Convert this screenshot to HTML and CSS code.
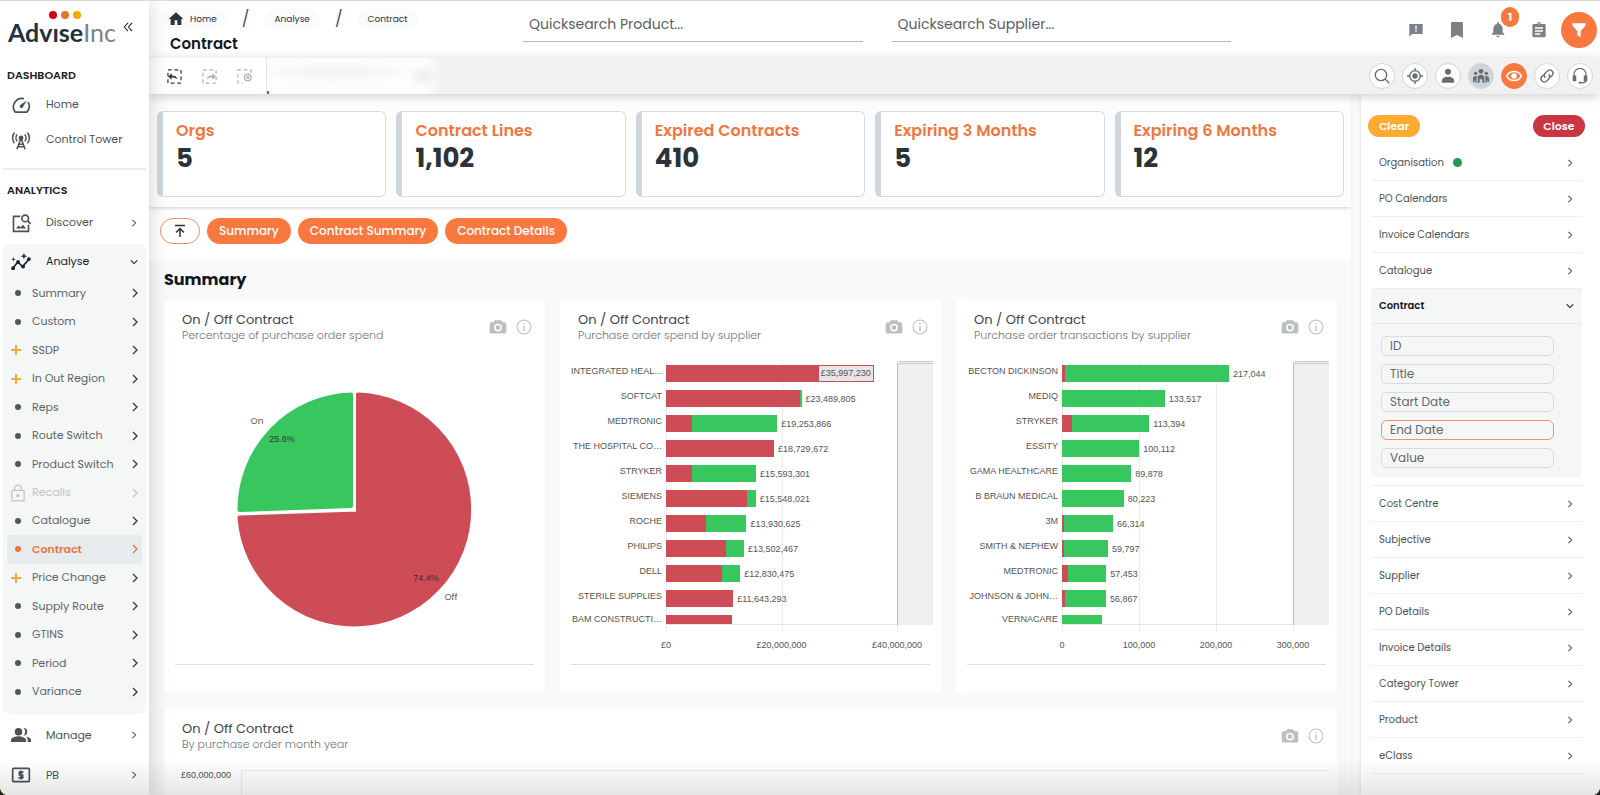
FILE: index.html
```html
<!DOCTYPE html>
<html lang="en">
<head>
    <meta charset="UTF-8">
    <meta name="viewport" content="width=device-width, initial-scale=1.0">
    <title>AdviseInc - Contract</title>
    <link rel="stylesheet" href="styles.css">
</head>
<body>
    <!-- icon sprite -->
    <svg class="sprite" aria-hidden="true">
        <symbol id="i-right" viewBox="0 0 10 10"><path d="M3 1l4 4-4 4" fill="none" stroke="currentColor" stroke-width="1.3"/></symbol>
        <symbol id="i-down" viewBox="0 0 10 10"><path d="M1 3l4 4 4-4" fill="none" stroke="currentColor" stroke-width="1.3"/></symbol>
        <symbol id="i-camera" viewBox="0 0 24 24"><path fill="currentColor" fill-rule="evenodd" d="M8 3L6.200 5.500H3A2 2 0 0 0 1 7.500v11a2 2 0 0 0 2 2h18a2 2 0 0 0 2-2v-11a2 2 0 0 0-2-2h-3.200L16 3zM12 7.500a5.300 5.300 0 1 1 0 10.600a5.300 5.300 0 0 1 0-10.600zm0 2.100a3.200 3.200 0 1 0 0 6.400a3.200 3.200 0 0 0 0-6.400z"/></symbol>
        <symbol id="i-info" viewBox="0 0 24 24"><circle cx="12" cy="12" r="10.500" fill="none" stroke="currentColor" stroke-width="1.600"/><path d="M11 10h2v8h-2zM11 6h2v2h-2z" fill="currentColor"/></symbol>
    </svg>

    <aside class="sidebar">
        <div class="brand">
            <a class="logo" href="#home" aria-label="AdviseInc">
                <span class="logo-dots"><i class="dot-red"></i><i class="dot-orange"></i><i class="dot-yellow"></i></span>
                <b>Advıse</b><span>Inc</span>
            </a>
            <button class="collapse" aria-label="Collapse menu">
                <svg viewBox="0 0 12 12"><path d="M6 1L1.500 6L6 11M11 1L6.500 6L11 11" fill="none" stroke="currentColor" stroke-width="1.300"/></svg>
            </button>
        </div>

        <h2>DASHBOARD</h2>
        <a class="menu-item" href="#home">
            <svg viewBox="0 0 24 24" fill="none" stroke="currentColor" stroke-width="2"><path d="M5 20.500A10.300 10.300 0 0 1 15.500 4.300M20.500 8.500a10.300 10.300 0 0 1-1.500 12M4.500 20.500h15"/><path d="M19 6.500l-5 8.500a2 2 0 1 1-3-3z" fill="currentColor" stroke="none"/></svg>
            <span>Home</span>
        </a>
        <a class="menu-item" href="#tower">
            <svg viewBox="0 0 24 24" fill="none" stroke="currentColor" stroke-width="1.800"><path d="M12 10L7 23M12 10l5 13M9.500 17h5M8.500 20h7M7.500 13.500a6 6 0 0 1 0-8M16.500 13.500a6 6 0 0 0 0-8M4.300 16a10 10 0 0 1 0-13M19.700 16a10 10 0 0 0 0-13"/><circle cx="12" cy="9.500" r="2" fill="currentColor"/></svg>
            <span>Control Tower</span>
        </a>
        <hr>
        <h2>ANALYTICS</h2>
        <a class="menu-item" href="#discover">
            <svg viewBox="0 0 24 24" fill="none" stroke="currentColor" stroke-width="2"><path d="M11 4H3v18h18v-8"/><circle cx="17" cy="6.500" r="4"/><path d="M20 9.500l3.500 3.500"/><path d="M6 18.500l3-3.500 2.500 2 3-3 3.500 4.500z" fill="currentColor" stroke="none"/></svg>
            <span>Discover</span><svg class="chev"><use href="#i-right"/></svg>
        </a>

        <nav class="submenu">
            <a class="menu-item open" href="#analyse">
                <svg viewBox="0 0 24 24"><path d="M2 20l6-8 6 5.500L22 8" fill="none" stroke="currentColor" stroke-width="2"/><g fill="currentColor"><circle cx="2.500" cy="19.500" r="2.300"/><circle cx="8.500" cy="12" r="2.300"/><circle cx="14.500" cy="17.500" r="2.300"/><circle cx="21.500" cy="8.500" r="2.300"/><path d="M15.500 1l1 3 3 1-3 1-1 3-1-3-3-1 3-1zM3 6l.700 2 2 .700-2 .700-.700 2-.700-2-2-.700 2-.700z"/></g></svg>
                <span>Analyse</span><svg class="chev"><use href="#i-down"/></svg>
            </a>
            <ul>
                <li><a href="#summary"><i class="bullet"></i>Summary<svg class="chev"><use href="#i-right"/></svg></a></li>
                <li><a href="#custom"><i class="bullet"></i>Custom<svg class="chev"><use href="#i-right"/></svg></a></li>
                <li><a href="#ssdp"><i class="plus"></i>SSDP<svg class="chev"><use href="#i-right"/></svg></a></li>
                <li><a href="#region"><i class="plus"></i>In Out Region<svg class="chev"><use href="#i-right"/></svg></a></li>
                <li><a href="#reps"><i class="bullet"></i>Reps<svg class="chev"><use href="#i-right"/></svg></a></li>
                <li><a href="#route"><i class="bullet"></i>Route Switch<svg class="chev"><use href="#i-right"/></svg></a></li>
                <li><a href="#product"><i class="bullet"></i>Product Switch<svg class="chev"><use href="#i-right"/></svg></a></li>
                <li><a class="locked" href="#recalls"><svg class="lock" viewBox="0 0 16 20" fill="none" stroke="currentColor" stroke-width="1.500"><rect x="1" y="7" width="14" height="12" rx="1"/><path d="M4 7V5a4 4 0 0 1 8 0v2"/><circle cx="8" cy="13" r="1.200" fill="currentColor"/></svg>Recalls<svg class="chev"><use href="#i-right"/></svg></a></li>
                <li><a href="#catalogue"><i class="bullet"></i>Catalogue<svg class="chev"><use href="#i-right"/></svg></a></li>
                <li><a class="active" href="#contract"><i class="bullet"></i>Contract<svg class="chev"><use href="#i-right"/></svg></a></li>
                <li><a href="#price"><i class="plus"></i>Price Change<svg class="chev"><use href="#i-right"/></svg></a></li>
                <li><a href="#supply"><i class="bullet"></i>Supply Route<svg class="chev"><use href="#i-right"/></svg></a></li>
                <li><a href="#gtins"><i class="bullet"></i>GTINS<svg class="chev"><use href="#i-right"/></svg></a></li>
                <li><a href="#period"><i class="bullet"></i>Period<svg class="chev"><use href="#i-right"/></svg></a></li>
                <li><a href="#variance"><i class="bullet"></i>Variance<svg class="chev"><use href="#i-right"/></svg></a></li>
            </ul>
        </nav>

        <a class="menu-item tall" href="#manage">
            <svg viewBox="0 0 24 24" fill="currentColor"><circle cx="9" cy="8" r="4.500"/><path d="M0 20.500v-2.500c0-3 6-4.500 9-4.500s9 1.500 9 4.500v2.500zM15 3.500a4.500 4.500 0 0 1 0 9a6 6 0 0 0 0-9zM18 13.900c3 .600 6 1.900 6 4.100v2.500h-4v-2.500c0-1.700-.800-3-2-4.100z"/></svg>
            <span>Manage</span><svg class="chev"><use href="#i-right"/></svg>
        </a>
        <a class="menu-item tall" href="#pb">
            <svg viewBox="0 0 24 24" fill="none" stroke="currentColor" stroke-width="2"><rect x="2" y="4" width="20" height="16" rx="1"/><path d="M15 8.500h-5v3.500h4v3.500H9M12 6.500v11"/></svg>
            <span>PB</span><svg class="chev"><use href="#i-right"/></svg>
        </a>
    </aside>

    <div class="page">
        <header class="topbar">
            <div class="location">
                <nav class="crumbs">
                    <a class="crumb-home" href="#home"><svg viewBox="0 0 24 24"><path d="M10 21v-7h4v7h6v-9h3L12 2 1 12h3v9z" fill="currentColor"/></svg>Home</a>
                    <span>/</span>
                    <a href="#analyse">Analyse</a>
                    <span>/</span>
                    <a href="#contract">Contract</a>
                </nav>
                <h1>Contract</h1>
            </div>
            <div class="quicksearch">
                <input type="text" aria-label="Quicksearch product" placeholder="Quicksearch Product...">
                <input type="text" aria-label="Quicksearch supplier" placeholder="Quicksearch Supplier...">
            </div>
            <div class="top-icons">
                <button aria-label="Feedback"><svg viewBox="0 0 24 24"><path fill="currentColor" fill-rule="evenodd" d="M2 3h20v15H6l-4 4zM11 5.500v6h2v-6zM11 13v2h2v-2z"/></svg></button>
                <button aria-label="Bookmarks"><svg viewBox="0 0 24 24"><path fill="currentColor" d="M5 0h14a2 2 0 0 1 2 2v22l-9-4.500L3 24V2a2 2 0 0 1 2-2z"/></svg></button>
                <button class="bell" aria-label="Notifications"><svg viewBox="0 0 24 24"><path fill="currentColor" d="M12 23a2.500 2.500 0 0 0 2.500-2.500h-5A2.500 2.500 0 0 0 12 23zM19 15.500V10c0-3.500-2-6.300-5.300-7V2a1.700 1.700 0 0 0-3.400 0v1C7 3.700 5 6.500 5 10v5.500l-2.500 2.500v1h19v-1z"/></svg><span class="badge">1</span></button>
                <button aria-label="Tasks"><svg viewBox="0 0 24 24"><path fill="currentColor" fill-rule="evenodd" d="M9 3a3 3 0 0 1 6 0h5a2 2 0 0 1 2 2v16a2 2 0 0 1-2 2H4a2 2 0 0 1-2-2V5a2 2 0 0 1 2-2zM11 3.500h2v-1.500h-2zM6 8v2h12V8zM6 12.500v2h12v-2zM6 17v2h8v-2z"/></svg></button>
                <button class="filter" aria-label="Filters"><svg viewBox="0 0 24 24"><path fill="currentColor" d="M2 2h20v3l-7.500 9v9L9.500 20v-6L2 5z"/></svg></button>
            </div>
        </header>

        <div class="toolbar">
            <div class="history">
                <button aria-label="Undo selection"><svg viewBox="0 0 16 16"><rect x="1" y="1" width="14" height="14" fill="none" stroke="currentColor" stroke-width="1.300" stroke-dasharray="4 3"/><path d="M1 8l4-3.500v2.500c4 0 5 1 6 4-2-1.500-3-2-6-2v2.500z" fill="currentColor"/></svg></button>
                <button class="dim" aria-label="Redo selection"><svg viewBox="0 0 16 16"><rect x="1" y="1" width="14" height="14" fill="none" stroke="currentColor" stroke-width="1.300" stroke-dasharray="4 3"/><path d="M15 8l-4-3.500v2.500c-4 0-5 1-6 4 2-1.500 3-2 6-2v2.500z" fill="currentColor"/></svg></button>
                <button class="dim" aria-label="Clear selection"><svg viewBox="0 0 16 16" fill="none" stroke="currentColor" stroke-width="1.300"><path d="M15 4V1H1v14h5" stroke-dasharray="4 3"/><circle cx="11.500" cy="9" r="3.500"/><path d="M10 7.500l3 3M13 7.500l-3 3"/></svg></button>
            </div>
            <div class="selection"></div>
            <div class="tools">
                <button aria-label="Search"><svg viewBox="0 0 24 24" fill="none" stroke="currentColor" stroke-width="2"><circle cx="10.500" cy="10.500" r="8.500"/><path d="M16.500 16.500l6.500 6.500"/></svg></button>
                <button aria-label="Target"><svg viewBox="0 0 24 24" fill="none" stroke="currentColor" stroke-width="2"><circle cx="12" cy="12" r="8"/><circle cx="12" cy="12" r="3" fill="currentColor"/><path d="M12 0v5M12 19v5M0 12h5M19 12h5"/></svg></button>
                <button aria-label="User"><svg viewBox="0 0 24 24" fill="currentColor"><circle cx="12" cy="5.500" r="4.500"/><path d="M2.500 22c0-7 3.500-9 9.500-9s9.500 2 9.500 9z"/></svg></button>
                <button class="grey" aria-label="Groups"><svg viewBox="0 0 24 24" fill="currentColor"><circle cx="12" cy="5" r="3.500"/><circle cx="4" cy="8" r="2.500"/><circle cx="20" cy="8" r="2.500"/><path d="M7 22v-7c0-4 2-5 5-5s5 1 5 5v7h-3v-5h-4v5zM0 21v-5c0-3 1.500-4.500 5.500-4v10H3.500v-4H2.500v3zM24 21v-5c0-3-1.500-4.500-5.500-4v10h2v-4h1v3z"/></svg></button>
                <button class="orange" aria-label="View"><svg viewBox="0 0 24 24" fill="none" stroke="currentColor" stroke-width="2.400"><path d="M1 12c4.500-9 17.500-9 22 0-4.500 9-17.500 9-22 0z"/><circle cx="12" cy="12" r="3" fill="currentColor"/></svg></button>
                <button aria-label="Link"><svg viewBox="0 0 24 24" fill="none" stroke="currentColor" stroke-width="2"><path d="M9.500 14.500a5 5 0 0 1 0-7l3.500-3.500a5 5 0 0 1 7 7l-3 3M14.500 9.500a5 5 0 0 1 0 7L11 20a5 5 0 0 1-7-7l3-3"/></svg></button>
                <button aria-label="Support"><svg viewBox="0 0 24 24" fill="none" stroke="currentColor" stroke-width="1.800"><path d="M3 12V9.500a9 9 0 0 1 18 0V18a4 4 0 0 1-4 4h-5"/><path d="M2 12h3.500v7H2zM18.500 12H22v7h-3.500z" fill="currentColor"/><path d="M10 22h3" stroke-width="3"/></svg></button>
            </div>
        </div>

        <div class="body">
            <main>
                <section class="kpis">
                    <div class="kpi"><h3>Orgs</h3><p>5</p></div>
                    <div class="kpi"><h3>Contract Lines</h3><p>1,102</p></div>
                    <div class="kpi"><h3>Expired Contracts</h3><p>410</p></div>
                    <div class="kpi"><h3>Expiring 3 Months</h3><p>5</p></div>
                    <div class="kpi"><h3>Expiring 6 Months</h3><p>12</p></div>
                </section>

                <div class="jump">
                    <button class="to-top" aria-label="Back to top"><svg viewBox="0 0 14 14"><path d="M2 1.500h10M7 13V5M3 8.500l4-4 4 4" fill="none" stroke="currentColor" stroke-width="1.500"/></svg></button>
                    <button>Summary</button>
                    <button>Contract Summary</button>
                    <button>Contract Details</button>
                </div>

                <section class="summary">
                    <h2>Summary</h2>
                    <div class="cards">
                        <article class="card">
                            <div class="card-head">
                                <div><h3>On / Off Contract</h3><p>Percentage of purchase order spend</p></div>
                                <svg><use href="#i-camera"/></svg><svg class="info"><use href="#i-info"/></svg>
                            </div>
                            <svg class="pie" viewBox="0 0 359 293">
                                <path class="pie-off" d="M183 33.500A115 115 0 1 1 64.500 156.500L183 152.500z"/>
                                <path class="pie-on" d="M176 33.500A115 115 0 0 0 64.500 149L176 145z"/>
                                <text x="82" y="63">On</text>
                                <text class="pct" x="107" y="81">25.6%</text>
                                <text class="pct" x="251" y="220">74.4%</text>
                                <text x="276" y="239">Off</text>
                            </svg>
                            <hr>
                        </article>

                        <article class="card">
                            <div class="card-head">
                                <div><h3>On / Off Contract</h3><p>Purchase order spend by supplier</p></div>
                                <svg><use href="#i-camera"/></svg><svg class="info"><use href="#i-info"/></svg>
                            </div>
                            <div class="chart halves">
                                <div class="rows">
                                    <div class="row"><span class="name">INTEGRATED HEAL…</span><div class="track"><i class="off" style="width:90%"><span class="inside">£35,997,230</span></i></div></div>
                                    <div class="row"><span class="name">SOFTCAT</span><div class="track"><i class="off" style="width:57.9%"></i><i class="on" style="width:0.8%"></i><span>£23,489,805</span></div></div>
                                    <div class="row"><span class="name">MEDTRONIC</span><div class="track"><i class="off" style="width:11.3%"></i><i class="on" style="width:36.9%"></i><span>£19,253,866</span></div></div>
                                    <div class="row"><span class="name">THE HOSPITAL CO…</span><div class="track"><i class="off" style="width:46.8%"></i><span>£18,729,672</span></div></div>
                                    <div class="row"><span class="name">STRYKER</span><div class="track"><i class="off" style="width:11.3%"></i><i class="on" style="width:27.7%"></i><span>£15,593,301</span></div></div>
                                    <div class="row"><span class="name">SIEMENS</span><div class="track"><i class="off" style="width:34.9%"></i><i class="on" style="width:4%"></i><span>£15,548,021</span></div></div>
                                    <div class="row"><span class="name">ROCHE</span><div class="track"><i class="off" style="width:17.1%"></i><i class="on" style="width:17.7%"></i><span>£13,930,625</span></div></div>
                                    <div class="row"><span class="name">PHILIPS</span><div class="track"><i class="off" style="width:25.8%"></i><i class="on" style="width:8%"></i><span>£13,502,467</span></div></div>
                                    <div class="row"><span class="name">DELL</span><div class="track"><i class="off" style="width:24.2%"></i><i class="on" style="width:7.9%"></i><span>£12,830,475</span></div></div>
                                    <div class="row"><span class="name">STERILE SUPPLIES</span><div class="track"><i class="off" style="width:29.1%"></i><span>£11,643,293</span></div></div>
                                    <div class="row"><span class="name">BAM CONSTRUCTI…</span><div class="track"><i class="off" style="width:28.5%"></i></div></div>
                                </div>
                                <div class="scroller"></div>
                                <div class="axis"><span>£0</span><span>£20,000,000</span><span>£40,000,000</span></div>
                            </div>
                            <hr>
                        </article>

                        <article class="card">
                            <div class="card-head">
                                <div><h3>On / Off Contract</h3><p>Purchase order transactions by supplier</p></div>
                                <svg><use href="#i-camera"/></svg><svg class="info"><use href="#i-info"/></svg>
                            </div>
                            <div class="chart thirds">
                                <div class="rows">
                                    <div class="row"><span class="name">BECTON DICKINSON</span><div class="track"><i class="off" style="width:1.3%"></i><i class="on" style="width:71%"></i><span>217,044</span></div></div>
                                    <div class="row"><span class="name">MEDIQ</span><div class="track"><i class="on" style="width:44.5%"></i><span>133,517</span></div></div>
                                    <div class="row"><span class="name">STRYKER</span><div class="track"><i class="off" style="width:4.2%"></i><i class="on" style="width:33.6%"></i><span>113,394</span></div></div>
                                    <div class="row"><span class="name">ESSITY</span><div class="track"><i class="on" style="width:33.4%"></i><span>100,112</span></div></div>
                                    <div class="row"><span class="name">GAMA HEALTHCARE</span><div class="track"><i class="on" style="width:30%"></i><span>89,878</span></div></div>
                                    <div class="row"><span class="name">B BRAUN MEDICAL</span><div class="track"><i class="off" style="width:0.2%"></i><i class="on" style="width:26.5%"></i><span>80,223</span></div></div>
                                    <div class="row"><span class="name">3M</span><div class="track"><i class="off" style="width:0.8%"></i><i class="on" style="width:21.3%"></i><span>66,314</span></div></div>
                                    <div class="row"><span class="name">SMITH &amp; NEPHEW</span><div class="track"><i class="off" style="width:0.8%"></i><i class="on" style="width:19.1%"></i><span>59,797</span></div></div>
                                    <div class="row"><span class="name">MEDTRONIC</span><div class="track"><i class="off" style="width:2.6%"></i><i class="on" style="width:16.6%"></i><span>57,453</span></div></div>
                                    <div class="row"><span class="name">JOHNSON &amp; JOHN…</span><div class="track"><i class="off" style="width:1.3%"></i><i class="on" style="width:17.7%"></i><span>56,867</span></div></div>
                                    <div class="row"><span class="name">VERNACARE</span><div class="track"><i class="on" style="width:17.5%"></i></div></div>
                                </div>
                                <div class="scroller"></div>
                                <div class="axis"><span>0</span><span>100,000</span><span>200,000</span><span>300,000</span></div>
                            </div>
                            <hr>
                        </article>

                        <article class="card wide">
                            <div class="card-head">
                                <div><h3>On / Off Contract</h3><p>By purchase order month year</p></div>
                                <svg><use href="#i-camera"/></svg><svg class="info"><use href="#i-info"/></svg>
                            </div>
                            <div class="timeline"><span>£60,000,000</span><div class="plot"></div></div>
                        </article>
                    </div>
                </section>
            </main>

            <aside class="filters">
                <div class="filter-actions">
                    <button class="clear">Clear</button>
                    <button class="close">Close</button>
                </div>
                <ul>
                    <li><button>Organisation<i class="on-dot"></i><svg class="chev"><use href="#i-right"/></svg></button></li>
                    <li><button>PO Calendars<svg class="chev"><use href="#i-right"/></svg></button></li>
                    <li><button>Invoice Calendars<svg class="chev"><use href="#i-right"/></svg></button></li>
                    <li><button>Catalogue<svg class="chev"><use href="#i-right"/></svg></button></li>
                    <li class="expanded">
                        <button>Contract<svg class="chev"><use href="#i-down"/></svg></button>
                        <div class="options">
                            <button>ID</button>
                            <button>Title</button>
                            <button>Start Date</button>
                            <button class="current">End Date</button>
                            <button>Value</button>
                        </div>
                    </li>
                    <li><button>Cost Centre<svg class="chev"><use href="#i-right"/></svg></button></li>
                    <li><button>Subjective<svg class="chev"><use href="#i-right"/></svg></button></li>
                    <li><button>Supplier<svg class="chev"><use href="#i-right"/></svg></button></li>
                    <li><button>PO Details<svg class="chev"><use href="#i-right"/></svg></button></li>
                    <li><button>Invoice Details<svg class="chev"><use href="#i-right"/></svg></button></li>
                    <li><button>Category Tower<svg class="chev"><use href="#i-right"/></svg></button></li>
                    <li><button>Product<svg class="chev"><use href="#i-right"/></svg></button></li>
                    <li><button>eClass<svg class="chev"><use href="#i-right"/></svg></button></li>
                </ul>
            </aside>
        </div>
    </div>
    <div class="fade"></div>
</body>
</html>
```
FILE: styles.css
```css
* {
    box-sizing: border-box;
}
html {
    background: #2b2410;
}
body {
    margin: 0;
    height: 100vh;
    display: flex;
    overflow: hidden;
    position: relative;
    border-top: 1px solid #dcdcdc;
    border-radius: 0 0 8px 8px;
    background: #fdfdfd;
    font-family: Poppins, Inter, sans-serif;
    font-size: 11px;
    color: #4a5258;
}
h1, h2, h3, p, ul {
    margin: 0;
    padding: 0;
}
ul {
    list-style: none;
}
a {
    color: inherit;
    text-decoration: none;
}
button {
    border: 0;
    padding: 0;
    background: none;
    font: inherit;
    color: inherit;
    cursor: pointer;
}
svg {
    display: block;
    flex-shrink: 0;
}
.sprite {
    display: none;
}
.chev {
    width: 8px;
    height: 8px;
    margin-left: auto;
}

/* sidebar */
.sidebar {
    width: 149px;
    flex-shrink: 0;
    display: flex;
    flex-direction: column;
    padding: 0 3px;
    background: #fff;
    box-shadow: 0 0 20px rgba(0, 0, 0, 0.18);
    z-index: 3;
}
.brand {
    display: flex;
    align-items: center;
    gap: 8px;
    height: 62px;
    padding: 0 5px 4px;
}
.logo {
    width: 107px;
    position: relative;
    padding-top: 4px;
    font-family: Lato, sans-serif;
    font-size: 25px;
    line-height: 24px;
    color: #7d8286;
    white-space: nowrap;
    display: flex;
}
.logo b {
    color: #22313d;
}
.logo-dots {
    position: absolute;
    top: -5px;
    left: 41px;
    display: flex;
    gap: 4px;
}
.logo-dots i {
    width: 8px;
    height: 8px;
    border-radius: 50%;
}
.dot-red {
    background: #d0021b;
}
.dot-orange {
    background: #e2771f;
}
.dot-yellow {
    background: #f5a800;
}
.collapse {
    padding-bottom: 6px;
}
.collapse svg {
    width: 10px;
    height: 10px;
    color: #1e2a33;
}
.sidebar h2 {
    padding-left: 4px;
    font-size: 11px;
    font-weight: 600;
    line-height: 24px;
    color: #1a2129;
}
.sidebar hr {
    width: 100%;
    margin: 11px 0 8px;
    border: 0;
    border-top: 2px solid #e9ecef;
}
.sidebar hr + h2 {
    padding-bottom: 3px;
}
.menu-item {
    display: flex;
    align-items: center;
    height: 35px;
    padding: 0 8px;
    flex-shrink: 0;
}
.menu-item span {
    margin-left: 15px;
}
.menu-item svg:first-child {
    width: 20px;
    height: 20px;
}
.menu-item.tall {
    height: 40px;
}
.menu-item.open {
    color: #1a2129;
}
.submenu {
    flex: 1;
    display: flex;
    flex-direction: column;
    margin: 4px 0 1px;
    padding-bottom: 8px;
    border-radius: 6px;
    background: #f5f7f7;
}
.submenu ul {
    flex: 1;
    display: flex;
    flex-direction: column;
    padding: 0 4px;
}
.submenu li {
    flex: 1;
    display: flex;
}
.submenu li a {
    flex: 1;
    display: flex;
    align-items: center;
    padding-right: 2px;
    border-radius: 4px;
    color: #5b6369;
}
.submenu li .chev {
    width: 10px;
    height: 10px;
    color: #33393e;
}
.bullet {
    width: 6px;
    height: 6px;
    margin: 0 11px 0 8px;
    border-radius: 50%;
    background: #4f575d;
}
.plus {
    width: 10px;
    height: 10px;
    margin: 0 11px 0 4px;
    background: linear-gradient(#f6a935, #f6a935) center / 10px 2px no-repeat, linear-gradient(#f6a935, #f6a935) center / 2px 10px no-repeat;
}
.lock {
    width: 14px;
    height: 20px;
    margin: 0 7px 0 4px;
}
.submenu li .locked, .submenu li .locked .chev {
    color: #bfc3c5;
}
.submenu li .active {
    background: #e6ebee;
    font-weight: 600;
}
.submenu li .active, .submenu li .active .chev {
    color: #f0713a;
}
.active .bullet {
    background: #f0713a;
}

/* header */
.page {
    flex: 1;
    min-width: 0;
    display: flex;
    flex-direction: column;
}
.topbar {
    display: flex;
    height: 57px;
    flex-shrink: 0;
    padding-right: 3px;
    background: #fff;
}
.location {
    width: 374px;
    padding: 8px 0 0 14px;
}
.crumbs {
    display: flex;
    align-items: center;
    gap: 15px;
    font-size: 9px;
    line-height: 20px;
}
.crumbs a {
    display: flex;
    align-items: center;
    gap: 6px;
    padding: 0 10px;
    border-radius: 10px;
    background: #fafbfb;
    color: #2c343a;
}
.crumbs span {
    font-size: 16px;
}
.crumbs svg {
    width: 16px;
    height: 16px;
}
.crumbs .crumb-home {
    padding-left: 5px;
}
.location h1 {
    padding: 5px 0 0 7px;
    font-size: 15px;
    font-weight: 600;
    line-height: 20px;
    color: #12181e;
}
.quicksearch {
    flex: 1;
    display: flex;
    gap: 29px;
    max-width: 708px;
}
.quicksearch input {
    flex: 1;
    min-width: 0;
    height: 41px;
    padding: 6px 6px 0;
    border: 0;
    border-bottom: 1px solid #b5b9bb;
    background: none;
    font: inherit;
    font-size: 14px;
}
.quicksearch input::placeholder {
    color: #596066;
}
.top-icons {
    display: flex;
    align-items: center;
    gap: 25px;
    margin-left: auto;
    color: #7b8287;
}
.top-icons button {
    position: relative;
}
.top-icons svg {
    width: 16px;
    height: 16px;
}
.badge {
    position: absolute;
    left: 11px;
    top: -15px;
    width: 18px;
    border-radius: 9px;
    background: #f87840;
    color: #fff;
    font-weight: bold;
    font-size: 11px;
    line-height: 20px;
}
.top-icons .filter {
    width: 36px;
    height: 36px;
    margin-left: -11px;
    display: grid;
    place-items: center;
    border-radius: 50%;
    background: #f87840;
    color: #fff;
}

/* toolbar */
.toolbar {
    display: flex;
    align-items: center;
    height: 36px;
    flex-shrink: 0;
    padding-right: 7px;
    background: #f1f1f1;
    box-shadow: 0 2px 10px rgba(0, 0, 0, 0.2);
    z-index: 2;
}
.history {
    width: 117px;
    align-self: stretch;
    display: flex;
    align-items: center;
    gap: 20px;
    padding-left: 18px;
    background: #fff;
    color: #33393e;
}
.history svg {
    width: 15px;
    height: 15px;
}
.dim {
    color: #b0b3b5;
}
.selection {
    width: 176px;
    align-self: stretch;
    border-left: 1px solid #e4e4e4;
    background: linear-gradient(#269a45, #269a45) left bottom / 2px 3px no-repeat, radial-gradient(ellipse 14px 12px at 156px 18px, #ececec, transparent), radial-gradient(ellipse 90px 12px at 70px 14px, #f2f2f2, transparent), linear-gradient(90deg, #fdfdfd 90%, #f1f1f1);
}
.tools {
    display: flex;
    gap: 7px;
    margin-left: auto;
}
.tools button {
    width: 26px;
    height: 26px;
    display: grid;
    place-items: center;
    border: 1px solid #d3d6d8;
    border-radius: 50%;
    background: #fff;
    color: #656d73;
}
.tools svg {
    width: 16px;
    height: 16px;
}
.tools .grey {
    background: #ced5d9;
}
.tools .orange {
    border-color: #f87840;
    background: #f87840;
    color: #fff;
}

/* content */
.body {
    flex: 1;
    display: flex;
    gap: 10px;
    min-height: 0;
}
main {
    flex: 1;
    min-width: 0;
    overflow: hidden;
    background: #fff;
    box-shadow: 0 0 8px rgba(0, 0, 0, 0.08);
}
.kpis {
    display: grid;
    grid-template-columns: repeat(5, 1fr);
    gap: 10px;
    padding: 17px 7px 10px 8px;
    background: #fdfdfd;
    box-shadow: 0 1px 4px rgba(0, 0, 0, 0.2);
}
.kpi {
    height: 86px;
    padding: 9px 13px;
    border: 1px solid #d3dce1;
    border-left: 6px solid #cdd7dd;
    border-radius: 6px;
    background: #fff;
}
.kpi h3 {
    font-size: 16px;
    font-weight: 600;
    line-height: 20px;
    color: #f0763f;
}
.kpi p {
    font-size: 26px;
    line-height: 34px;
    font-weight: bold;
    color: #2a323b;
}
.jump {
    display: flex;
    gap: 7px;
    padding: 11px 11px 16px;
}
.jump button {
    height: 26px;
    padding: 0 12px;
    border-radius: 13px;
    background: #f87840;
    color: #fff;
    font-size: 12px;
    font-weight: 500;
}
.jump .to-top {
    width: 40px;
    border: 1px solid #f0906a;
    background: #fff;
    color: #2a323b;
}
.to-top svg {
    width: 14px;
    height: 14px;
}
.summary {
    padding: 10px 14px 0 15px;
    background: #f9f9f9;
}
.summary h2 {
    font-size: 16px;
    line-height: 20px;
    color: #10161d;
}
.cards {
    display: grid;
    grid-template-columns: repeat(3, 1fr);
    gap: 15px;
    padding-top: 9px;
}
.card {
    padding: 12px 8px 28px 11px;
    border-radius: 6px;
    background: #fff;
}
.card-head {
    display: flex;
    align-items: center;
    gap: 8px;
    padding: 0 4px 0 7px;
    color: #bcbfc1;
}
.card-head div {
    flex: 1;
}
.card-head h3 {
    font-size: 13px;
    line-height: 17px;
    font-weight: 400;
    color: #3d454b;
}
.card-head p {
    font-size: 11px;
    line-height: 15px;
    font-weight: 300;
    color: #6d747a;
}
.card-head svg {
    width: 20px;
    height: 18px;
}
.card-head .info {
    width: 16px;
    margin-right: 1px;
}
.card hr {
    margin: 0 3px 0 0;
    border: 0;
    border-top: 1px solid #dcdfe1;
}
.pie {
    width: calc(100% - 3px);
    margin: 18px 0 10px;
    stroke-width: 4px;
    stroke-linejoin: round;
    font-size: 9px;
    text-anchor: middle;
}
.pie text {
    stroke: none;
    fill: #555;
}
.pie .pct {
    font-family: "Liberation Sans", sans-serif;
    fill: #2f3336;
}
.pie-off {
    fill: #cd4c55;
    stroke: #cd4c55;
}
.pie-on {
    fill: #38c65f;
    stroke: #38c65f;
}

/* bar charts */
.chart {
    display: grid;
    grid-template-columns: 1fr 36px;
    margin: 18px 0 10px;
    font-family: "Liberation Sans", sans-serif;
    font-size: 9px;
    color: #555;
}
.rows {
    display: flex;
    flex-direction: column;
    gap: 8px;
    height: 264px;
    padding-top: 4px;
    overflow: hidden;
    background: linear-gradient(#e3e3e3, #e3e3e3) 95px 100% / 100% 1px no-repeat;
}
.row {
    display: flex;
    height: 17px;
    flex-shrink: 0;
}
.name {
    width: 95px;
    padding-right: 4px;
    line-height: 13px;
    text-align: right;
    white-space: nowrap;
}
.row:last-child {
    height: 9px;
    overflow: hidden;
}
.row:last-child .name {
    line-height: 9px;
}
.track {
    flex: 1;
    display: flex;
    align-items: center;
}
.track i {
    height: 17px;
    font-style: normal;
}
.track > span {
    margin-left: 4px;
}
.off {
    background: #cd4c55;
}
.on {
    background: #38c65f;
}
.inside {
    float: right;
    margin: 1px;
    padding: 0 2px;
    line-height: 15px;
    background: #e6e6e6;
}
.halves {
    background: linear-gradient(90deg, transparent 95px, #ececec 95px, #ececec 96px, transparent 96px, transparent 211px, #ececec 211px, #ececec 212px, transparent 212px, transparent 326px, #ececec 326px, #ececec 327px, transparent 327px) 0 0 / 100% 271px no-repeat;
}
.thirds {
    background: linear-gradient(90deg, transparent 95px, #ececec 95px, #ececec 96px, transparent 96px, transparent 172px, #ececec 172px, #ececec 173px, transparent 173px, transparent 249px, #ececec 249px, #ececec 250px, transparent 250px, transparent 326px, #ececec 326px, #ececec 327px, transparent 327px) 0 0 / 100% 271px no-repeat;
}
.scroller {
    border-left: 1px solid #bbb;
    border-top: 3px double #ccc;
    border-top-left-radius: 4px;
    background: #f0f0f0;
}
.axis {
    display: flex;
    justify-content: space-between;
    margin-left: 95px;
    padding-top: 6px;
    line-height: 28px;
    height: 29px;
}
.axis span {
    width: 0;
    display: flex;
    justify-content: center;
    white-space: nowrap;
}
.wide {
    grid-column: 1 / -1;
}
.timeline {
    display: flex;
    gap: 10px;
    padding: 18px 0 0 6px;
    font-family: "Liberation Sans", sans-serif;
    font-size: 9px;
}
.timeline .plot {
    flex: 1;
    height: 200px;
    border-top: 1px solid #ececec;
    border-left: 1px solid #ececec;
}

/* filters */
.filters {
    width: 239px;
    flex-shrink: 0;
    padding: 21px 18px 0 10px;
    background: #fff;
    box-shadow: 0 0 6px rgba(0, 0, 0, 0.14);
    overflow: hidden;
}
.filter-actions {
    display: flex;
    justify-content: space-between;
    margin: 0 -3px 8px;
}
.filter-actions button {
    width: 52px;
    border-radius: 11px;
    color: #fff;
    font-size: 11px;
    font-weight: 600;
    line-height: 22px;
}
.clear {
    background: #fbab30;
}
.close {
    background: #c93540;
}
.filters li {
    border-bottom: 1px solid #eceeef;
}
.filters li > button {
    width: 100%;
    height: 35px;
    display: flex;
    align-items: center;
    padding: 0 8px;
    font-size: 10px;
}
.on-dot {
    width: 9px;
    height: 9px;
    margin-left: 9px;
    border-radius: 50%;
    background: #269a45;
}
.expanded > button {
    background: #f5f7f7;
    color: #10161d;
    font-weight: 600;
    border-bottom: 1px solid #e7eaec;
}
.filters .expanded {
    padding-bottom: 7px;
}
.options {
    display: grid;
    gap: 8px;
    padding: 12px 28px 10px 10px;
    border-radius: 0 0 5px 5px;
    background: #f5f7f7;
}
.options button {
    padding-left: 8px;
    border: 1px solid #d7dde3;
    border-radius: 6px;
    font-size: 12px;
    line-height: 18px;
    text-align: left;
    color: #60676d;
}
.options .current {
    border-color: #f0906a;
}

.fade {
    position: absolute;
    left: 0;
    right: 0;
    bottom: 0;
    height: 36px;
    background: linear-gradient(transparent, rgba(0, 0, 0, 0.1));
    pointer-events: none;
    z-index: 4;
}
```
